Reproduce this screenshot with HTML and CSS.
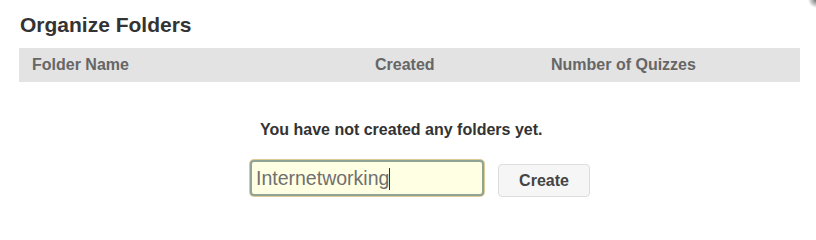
FILE: index.html
```html
<!DOCTYPE html>
<html lang="en">
<head>
    <meta charset="UTF-8">
    <title>Organize Folders</title>
    <link rel="stylesheet" href="styles.css">
</head>
<body>
<div class="corner"></div>
<div id="container">
    <h2>Organize Folders</h2>

    <div class="cabecalho">
        <span class="col-nome">Folder Name</span>
        <span class="col-data">Created</span>
        <span class="col-num">Number of Quizzes</span>
    </div>

    <p class="vazio">You have not created any folders yet.</p>

    <div class="form-pasta">
        <div class="campo">Internetworking<span class="cursor"></span></div>
        <button class="botao">Create</button>
    </div>
</div>
</body>
</html>
```

FILE: styles.css
```css
body {
    margin: 0;
    background-color: white;
    font-family: "Liberation Sans", Arial, sans-serif;
}

/* sombra no canto superior direito */
.corner {
    position: absolute;
    top: 0;
    right: 0;
    width: 8px;
    height: 8px;
    background: radial-gradient(circle at 100% 0, rgba(0,0,0,0.55) 0, rgba(0,0,0,0.2) 5px, rgba(0,0,0,0) 8px);
}

#container {
    padding: 11px 16px 0 19px;
}

h2 {
    margin: 0 0 0 1px;
    font-size: 21px;
    line-height: 28px;
    color: #333;
}

.cabecalho {
    display: flex;
    margin-top: 9px;
    height: 34px;
    align-items: center;
    background-color: #e3e3e3;
    font-size: 16px;
    font-weight: bold;
    color: #666;
}

.col-nome {
    margin-left: 13px;
    width: 343px;
}

.col-data {
    width: 176px;
}

.vazio {
    margin: 38px 0 0 241px;
    font-size: 16px;
    line-height: 20px;
    font-weight: bold;
    color: #333;
}

.form-pasta {
    display: flex;
    align-items: flex-start;
    gap: 14px;
    margin: 20px 0 0 231px;
}

.campo {
    box-sizing: border-box;
    width: 234px;
    height: 36px;
    padding: 5px 0 0 4px;
    border: 2px solid #8fa494;
    border-radius: 4px;
    box-shadow: 0 0 0 1px #dccb94;
    background-color: #ffffe3;
    font-size: 19.5px;
    color: #707070;
}

.cursor {
    display: inline-block;
    width: 1px;
    height: 22px;
    vertical-align: -5px;
    background-color: #333;
}

.botao {
    margin-top: 4px;
    width: 92px;
    height: 33px;
    border: 1px solid #ddd;
    border-radius: 4px;
    background-color: #f6f6f6;
    font-family: "Liberation Sans", Arial, sans-serif;
    font-size: 16px;
    font-weight: bold;
    color: #444;
}
```
